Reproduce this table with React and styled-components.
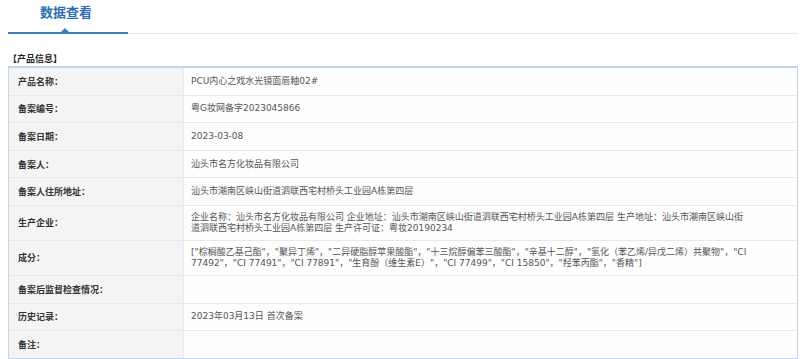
import React from 'react';
import styled, { createGlobalStyle } from 'styled-components';

// values are kept as the lines they wrap into on the original page
const rows = [
  { label: '产品名称：', lines: ['PCU内心之戏水光镜面唇釉02#'] },
  { label: '备案编号：', lines: ['粤G妆网备字2023045866'] },
  { label: '备案日期：', lines: ['2023-03-08'] },
  { label: '备案人：', lines: ['汕头市名方化妆品有限公司'] },
  { label: '备案人住所地址：', lines: ['汕头市潮南区峡山街道泗联西宅村桥头工业园A栋第四层'] },
  {
    label: '生产企业：',
    lines: [
      '企业名称：汕头市名方化妆品有限公司 企业地址：汕头市潮南区峡山街道泗联西宅村桥头工业园A栋第四层 生产地址：汕头市潮南区峡山街',
      '道泗联西宅村桥头工业园A栋第四层 生产许可证：粤妆20190234',
    ],
  },
  {
    label: '成分：',
    lines: [
      '["棕榈酸乙基己酯"，"聚异丁烯"，"二异硬脂醇苹果酸酯"，"十三烷醇偏苯三酸酯"，"辛基十二醇"，"氢化（苯乙烯/异戊二烯）共聚物"，"CI',
      '77492"，"CI 77491"，"CI 77891"，"生育酚（维生素E）"，"CI 77499"，"CI 15850"，"羟苯丙酯"，"香精"]',
    ],
  },
  { label: '备案后监督检查情况：', lines: [] },
  { label: '历史记录：', lines: ['2023年03月13日 首次备案'] },
  { label: '备注：', lines: [] },
];

export default function App() {
  return (
    <>
      <GlobalStyle />
      <Page>
        <TabBar>
          <Tab>
            数据查看
            <Caret />
          </Tab>
        </TabBar>
        <SectionTitle>【产品信息】</SectionTitle>
        <InfoTable>
          {rows.map((row) => (
            <Row key={row.label}>
              <Label>{row.label}</Label>
              <Value>
                {row.lines.map((line) => (
                  <Line key={line}>{line}</Line>
                ))}
              </Value>
            </Row>
          ))}
        </InfoTable>
      </Page>
    </>
  );
}

const GlobalStyle = createGlobalStyle`
  body {
    margin: 0;
    background: #fff;
    font-family: "Noto Sans CJK SC", "Noto Sans", sans-serif;
  }
`;

const Page = styled.div`
  padding: 0 2px 0 8px;
`;

const TabBar = styled.div`
  display: flex;
  border-bottom: 1px solid #e3e6ea;
  height: 33px;
`;

const Tab = styled.div`
  position: relative;
  width: 120px;
  display: flex;
  justify-content: center;
  padding: 3px 4px 0 0;
  box-sizing: border-box;
  font-size: 13px;
  font-weight: bold;
  line-height: 18px;
  color: #2f6db3;
  border-bottom: 2px solid #3b7dc4;
  margin-bottom: -1px;
`;

const Caret = styled.span`
  position: absolute;
  left: 53px;
  bottom: 0;
  width: 0;
  height: 0;
  border-left: 4px solid transparent;
  border-right: 4px solid transparent;
  border-bottom: 4px solid #3b7dc4;
`;

const SectionTitle = styled.div`
  margin-top: 19px;
  font-size: 9px;
  font-weight: bold;
  line-height: 12px;
  color: #222;
`;

const InfoTable = styled.div`
  border: 2px solid #c2d5eb;
  border-left-width: 1px;
  border-right-width: 1px;
  margin-top: 1px;
`;

const Row = styled.div`
  display: grid;
  grid-template-columns: 175px 1fr;
  border-top: 1px solid #e8e8e8;

  &:first-child {
    border-top: none;
  }
`;

const Label = styled.div`
  display: flex;
  align-items: center;
  min-height: 26.6px;
  padding: 0 9px;
  background: #f4f4f4;
  border-right: 1px solid #e8e8e8;
  font-size: 9px;
  font-weight: bold;
  color: #333;
`;

const Value = styled.div`
  display: flex;
  flex-direction: column;
  justify-content: center;
  min-height: 26.6px;
  padding: 6px 7px;
  box-sizing: border-box;
  background: #fdfdfd;
  font-family: "DejaVu Sans", "Noto Sans CJK SC", sans-serif;
  font-size: 9px;
  line-height: 11px;
  color: #555;
`;

const Line = styled.div`
  white-space: nowrap;
`;
